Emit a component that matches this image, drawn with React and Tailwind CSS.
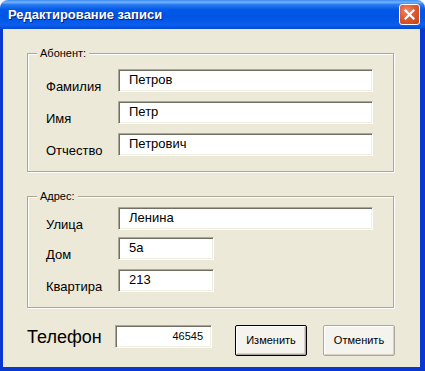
import React from "react";

const font = { fontFamily: '"Liberation Sans", Arial, sans-serif' };

function TextBox({ value, width = "w-[255px]", align = "text-left", small }) {
  return (
    <div
      className={`${width} h-[23px] flex items-center bg-white border border-t-[#aca899] border-l-[#aca899] border-b-white border-r-white shadow-[inset_1px_1px_0_#716f64,inset_-1px_-1px_0_#f1efe2] ${align} ${
        small ? "text-[11px] px-[8px] justify-end" : "text-[13px] pl-[10px] pb-[1px]"
      } text-black`}
    >
      {value}
    </div>
  );
}

function Row({ label, value, width, gapTop }) {
  return (
    <div className={`flex items-start h-[23px] ${gapTop}`}>
      <span className="w-[72px] pl-[18px] box-content pt-[10px] text-[13px] leading-[16px] text-black">
        {label}
      </span>
      <TextBox value={value} width={width} />
    </div>
  );
}

function Group({ title, children, className }) {
  return (
    <div
      className={`relative w-[367px] border border-[#aca899] shadow-[1px_1px_0_white,inset_1px_1px_0_white] ${className}`}
    >
      <span className="absolute -top-[8px] left-[9px] px-[3px] bg-[#ece9d8] text-[11px] leading-[14px] text-black">
        {title}
      </span>
      {children}
    </div>
  );
}

export default function App() {
  return (
    <div className="w-[425px] h-[371px] flex flex-col select-none" style={font}>
      {/* заголовок окна */}
      <div className="h-[29px] shrink-0 flex items-center justify-between pl-[8px] pr-[5px] rounded-t-[8px] bg-[linear-gradient(180deg,#3c8cf3_0%,#6fb1ff_8%,#2a7af0_16%,#0058e6_34%,#0055e3_60%,#0b5ef0_86%,#0548d0_100%)]">
        <span className="text-white font-bold text-[13px] [text-shadow:1px_1px_0_#0a1e6e]">
          Редактирование записи
        </span>
        <div className="w-[21px] h-[21px] rounded-[3px] border border-white bg-[radial-gradient(circle_at_35%_30%,#f08a6a_0%,#e0592f_45%,#c4401a_100%)] flex items-center justify-center">
          <svg width="11" height="11" viewBox="0 0 11 11">
            <path d="M1.5 1.5 L9.5 9.5 M9.5 1.5 L1.5 9.5" stroke="white" strokeWidth="2.2" strokeLinecap="square" />
          </svg>
        </div>
      </div>

      {/* клиентская область */}
      <div className="flex-1 bg-[#ece9d8] border-l-[3px] border-r-[5px] border-b-[4px] border-[#0838d0] pl-[24px] pt-[24px]">
        <Group title="Абонент:" className="h-[119px] pt-[15px]">
          <Row label="Фамилия" value="Петров" />
          <Row label="Имя" value="Петр" gapTop="mt-[9px]" />
          <Row label="Отчество" value="Петрович" gapTop="mt-[9px]" />
        </Group>

        <Group title="Адрес:" className="mt-[24px] h-[112px] pt-[10px]">
          <Row label="Улица" value="Ленина" />
          <Row label="Дом" value="5а" width="w-[96px]" gapTop="mt-[7px]" />
          <Row label="Квартира" value="213" width="w-[96px]" gapTop="mt-[9px]" />
        </Group>

        <div className="flex items-start mt-[17px]">
          <span className="w-[88px] pt-[1px] text-[18px] leading-[22px] text-black">Телефон</span>
          <TextBox value="46545" width="w-[97px]" small />
          <button className="ml-[23px] w-[72px] h-[31px] border border-black rounded-[2px] bg-[#f4f3ee] text-[11px] text-black shadow-[inset_1px_1px_0_white,inset_-1px_-1px_0_#a9a699,inset_-2px_-2px_0_#d6d0c5]">
            Изменить
          </button>
          <button className="ml-[16px] w-[72px] h-[31px] border border-[#aca899] rounded-[2px] bg-[#f4f3ee] text-[11px] text-black shadow-[inset_1px_1px_0_white,inset_-1px_-1px_0_#d6d0c5]">
            Отменить
          </button>
        </div>
      </div>
    </div>
  );
}
